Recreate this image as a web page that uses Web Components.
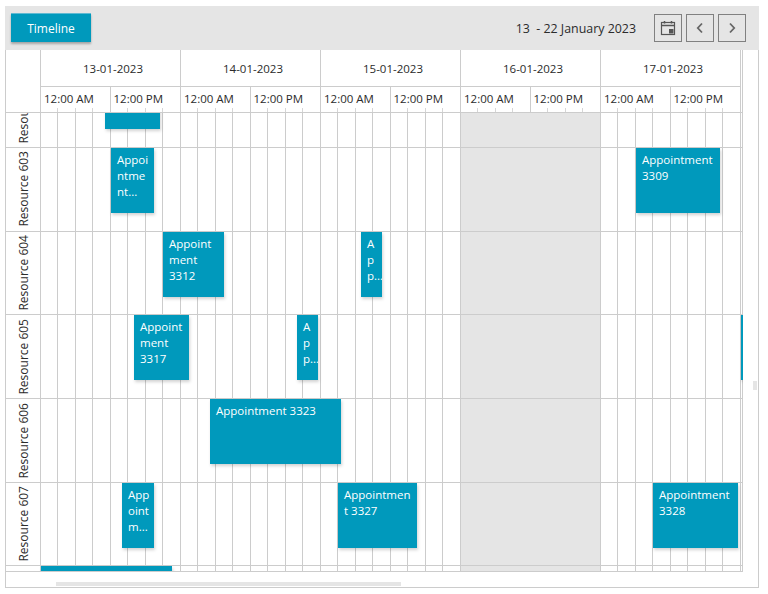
<!DOCTYPE html>
<html><head><meta charset="utf-8">
<style>
html,body{margin:0;padding:0;background:#fff}
body{width:768px;height:594px;overflow:hidden;font:11.5px "Open Sans",sans-serif;color:#2b2b2b}
</style></head><body>
<sch-app>
  <sch-toolbar slot="toolbar" range="13  - 22 January 2023"></sch-toolbar>
  <sch-grid>
    <sch-row label="Resource 602">
      <sch-appt style="left:64px;width:55px"></sch-appt>
    </sch-row>
    <sch-row label="Resource 603">
      <sch-appt style="left:70px;width:43px">Appoi<br>ntme<br>nt...</sch-appt>
      <sch-appt style="left:595px;width:84px">Appointment<br>3309</sch-appt>
    </sch-row>
    <sch-row label="Resource 604">
      <sch-appt style="left:122px;width:61px">Appoint<br>ment<br>3312</sch-appt>
      <sch-appt style="left:320px;width:21px">A<br>p<br>p...</sch-appt>
    </sch-row>
    <sch-row label="Resource 605">
      <sch-appt style="left:93px;width:55px">Appoint<br>ment<br>3317</sch-appt>
      <sch-appt style="left:256px;width:21px">A<br>p<br>p...</sch-appt>
      <sch-appt style="left:700px;width:2px"></sch-appt>
    </sch-row>
    <sch-row label="Resource 606">
      <sch-appt style="left:169px;width:131px">Appointment 3323</sch-appt>
    </sch-row>
    <sch-row label="Resource 607">
      <sch-appt style="left:81px;width:32px">App<br>oint<br>m...</sch-appt>
      <sch-appt style="left:297px;width:79px">Appointmen<br>t 3327</sch-appt>
      <sch-appt style="left:612px;width:85px">Appointment<br>3328</sch-appt>
    </sch-row>
    <sch-row>
      <sch-appt style="left:0;width:131px"></sch-appt>
    </sch-row>
  </sch-grid>
</sch-app>
<script>
customElements.define('sch-app',class extends HTMLElement{
  constructor(){super();this.attachShadow({mode:'open'}).innerHTML=`<style>
  :host{display:flex;flex-direction:column;box-sizing:border-box;width:754px;height:582px;margin:6px 0 0 5px;border:1px solid #ccc;border-top:0;position:relative}
  ::slotted([slot=toolbar]){flex:none;margin-left:-1px;margin-right:-1px}
  .hscroll{flex:none;height:15px;box-sizing:border-box;padding:10px 0 1px 50px}
  .thumb{display:block;width:345px;height:4px;background:#e5e5e5}
  .vthumb{position:absolute;left:747px;top:375px;width:4px;height:9px;background:#e5e5e5}
  </style><slot name="toolbar"></slot><slot></slot><div class="hscroll"><span class="thumb"></span></div><div class="vthumb"></div>`;}
});

customElements.define('sch-toolbar',class extends HTMLElement{
  constructor(){super();const r=this.getAttribute('range');this.attachShadow({mode:'open'}).innerHTML=`<style>
  :host{display:flex;align-items:center;height:44px;background:#e5e5e5;padding:0 13px 0 6px;box-sizing:border-box;gap:4px;font-size:12px;color:#2b2b2b}
  .view-wrap{align-self:flex-start;margin-top:7px}
  .view{display:block;width:80px;height:29px;box-sizing:border-box;border:0;border-top:1px solid #5fb9d2;background:#0099bc;color:#fff;font:12px "Open Sans",sans-serif;box-shadow:0 2px 2px rgba(0,0,0,.28);padding:0;margin:0}
  .range{margin-left:auto;margin-right:14px;white-space:pre;font-size:12.4px}
  .ic{width:28px;height:28px;box-sizing:border-box;border:1px solid #808080;display:flex;align-items:center;justify-content:center}
  svg{display:block;fill:none;stroke:#555;stroke-width:1.2}
  </style>
  <div class="view-wrap"><button class="view">Timeline</button></div>
  <span class="range">${r}</span>
  <span class="ic"><svg width="16" height="16" viewBox="0 0 16 16"><rect x="1.500" y="2.500" width="13" height="12"/><path d="M1.500 5.500h13" stroke-width="1.500"/><path d="M4.500 1v2.500M11.500 1v2.500" stroke-width="1.500"/><rect x="9" y="9" width="4.500" height="4.500" fill="#555" stroke="none"/></svg></span>
  <span class="ic"><svg width="14" height="14" viewBox="0 0 14 14"><path d="M9 2.500 4.800 7 9 11.500" stroke="#666" stroke-width="1.800"/></svg></span>
  <span class="ic"><svg width="14" height="14" viewBox="0 0 14 14"><path d="M5 2.500 9.200 7 5 11.500" stroke="#666" stroke-width="1.800"/></svg></span>`;}
});

customElements.define('sch-grid',class extends HTMLElement{
  constructor(){super();
    const days=['13-01-2023','14-01-2023','15-01-2023','16-01-2023','17-01-2023'];
    const head=days.map(d=>`<div class="day"><div class="date">${d}</div><div class="times"><span>12:00 AM</span><span>12:00 PM</span></div></div>`).join('');
    this.attachShadow({mode:'open'}).innerHTML=`<style>
    :host{display:block;flex:none;width:736px;height:522px;border-right:1px solid #ccc;box-sizing:content-box}
    .head{display:flex;height:63px;box-sizing:border-box;border-bottom:1px solid #ccc}
    .corner{width:35px;flex:none;box-sizing:border-box;border-right:1px solid #ccc}
    .day{width:140px;flex:none;box-sizing:border-box;border-right:1px solid #ccc}
    .date{height:37px;box-sizing:border-box;border-bottom:1px solid #ccc;display:flex;align-items:center;justify-content:center;padding-left:5px;font-size:11.5px}
    .times{display:flex;height:25px;
      background-image:linear-gradient(#d6d6d6,#d6d6d6),linear-gradient(#d6d6d6,#d6d6d6),linear-gradient(#d6d6d6,#d6d6d6),linear-gradient(#d6d6d6,#d6d6d6),linear-gradient(#d6d6d6,#d6d6d6),linear-gradient(#d6d6d6,#d6d6d6);
      background-size:1px 4px;background-repeat:no-repeat;
      background-position:16px 100%,34px 100%,51px 100%,86px 100%,104px 100%,121px 100%}
    .times span{width:70px;box-sizing:border-box;padding-left:3px;line-height:23px;font-size:11.5px;white-space:nowrap}
    .times span:first-child{border-right:1px solid #ccc}
    .body{height:459px;width:737px;overflow:hidden;border-bottom:1px solid #ccc;box-sizing:border-box}
    .inner{margin-top:-48.8px;width:736px}
    </style><div class="head"><div class="corner"></div>${head}</div>
    <div class="body"><div class="inner"><slot></slot></div></div>`;}
});

customElements.define('sch-row',class extends HTMLElement{
  constructor(){super();
    const cell='<i></i>'.repeat(8);
    const days=[0,1,2,3,4].map(i=>i===3?'<div class="d off"></div>':`<div class="d">${cell}</div>`).join('');
    const label=this.getAttribute('label');
    this.attachShadow({mode:'open'}).innerHTML=`<style>
    :host{display:flex;height:83.7px;box-sizing:border-box;border-bottom:1px solid #ccc}
    .label{width:35px;flex:none;box-sizing:border-box;border-right:1px solid #ccc;display:flex;align-items:center;justify-content:center;overflow:hidden}
    .label span{writing-mode:vertical-rl;transform:rotate(180deg);white-space:nowrap;font-size:12px;color:#2b2b2b}
    .track{position:relative;display:flex;width:701px;flex:none}
    .d{display:flex;width:140px;flex:none}
    .off{background:#e5e5e5;box-sizing:border-box;border-right:1px solid #ccc}
    i{display:block;width:18px;flex:none;box-sizing:border-box;border-right:1px solid #ccc}
    i:nth-child(odd){width:17px}
    </style><div class="label">${label?`<span>${label}</span>`:''}</div>
    <div class="track">${days}<slot></slot></div>`;}
});

customElements.define('sch-appt',class extends HTMLElement{
  constructor(){super();this.attachShadow({mode:'open'}).innerHTML=`<style>
  :host{position:absolute;top:0;height:65px;box-sizing:border-box;background:#0099bc;color:#fff;padding:4px 0 0 6px;font-size:11.5px;line-height:16px;white-space:nowrap;overflow:hidden;box-shadow:1px 2px 3px rgba(0,0,0,.18)}
  </style><slot></slot>`;}
});
</script>
</body></html>
